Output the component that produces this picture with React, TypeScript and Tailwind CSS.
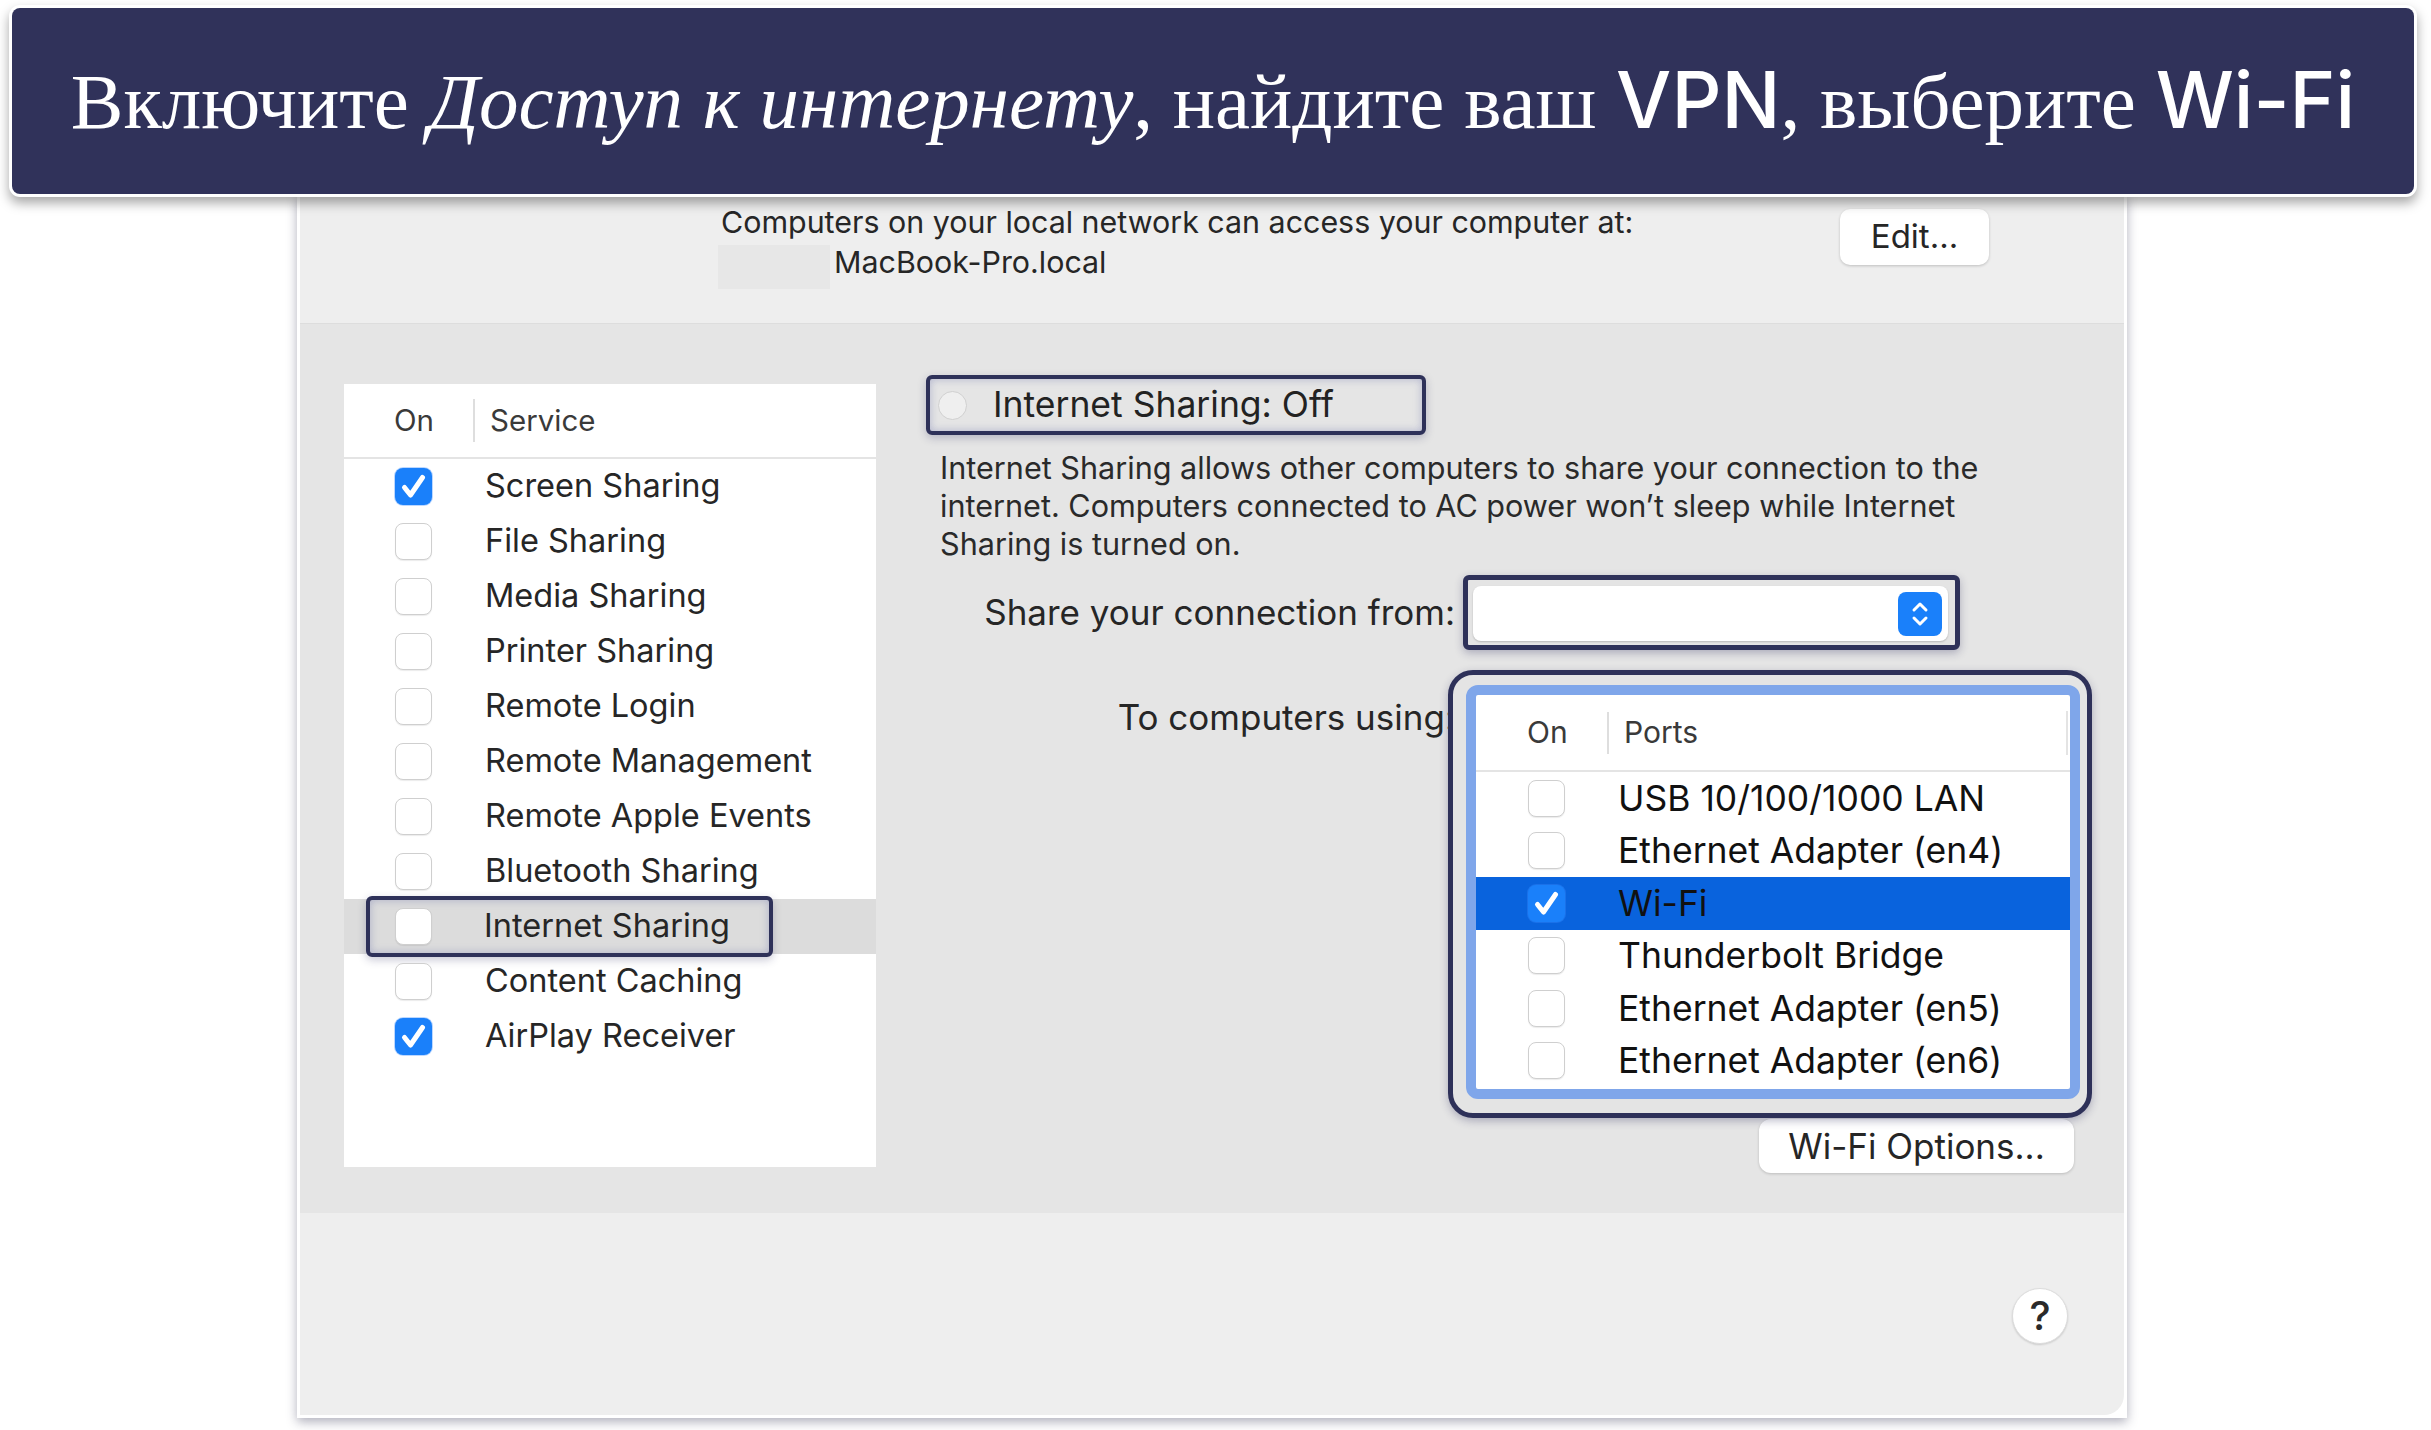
import React from "react";

const NAVY = "border-[#2e3159]";

function CheckBox({ checked = false }: { checked?: boolean }) {
  if (checked) {
    return (
      <span className="flex h-[37px] w-[37px] shrink-0 items-center justify-center rounded-[8px] bg-[#1a80fa] shadow-[0_0_0_1px_rgba(60,140,255,0.35)]">
        <svg width="37" height="37" viewBox="0 0 37 37" fill="none">
          <path d="M9.5 19.5 L15.5 27 L27.5 9.5" stroke="white" strokeWidth="5" strokeLinecap="round" strokeLinejoin="round" />
        </svg>
      </span>
    );
  }
  return (
    <span className="block h-[37px] w-[37px] shrink-0 rounded-[8px] border-[1.5px] border-[#cfcfcf] bg-white shadow-[0_1px_1px_rgba(0,0,0,0.08)]" />
  );
}

const services: { name: string; on: boolean }[] = [
  { name: "Screen Sharing", on: true },
  { name: "File Sharing", on: false },
  { name: "Media Sharing", on: false },
  { name: "Printer Sharing", on: false },
  { name: "Remote Login", on: false },
  { name: "Remote Management", on: false },
  { name: "Remote Apple Events", on: false },
  { name: "Bluetooth Sharing", on: false },
  { name: "Internet Sharing", on: false },
  { name: "Content Caching", on: false },
  { name: "AirPlay Receiver", on: true },
];

const ports: { name: string; on: boolean }[] = [
  { name: "USB 10/100/1000 LAN", on: false },
  { name: "Ethernet Adapter (en4)", on: false },
  { name: "Wi-Fi", on: true },
  { name: "Thunderbolt Bridge", on: false },
  { name: "Ethernet Adapter (en5)", on: false },
  { name: "Ethernet Adapter (en6)", on: false },
];

function Banner() {
  return (
    <div className="relative z-10 mx-[12px] mt-[8px] flex h-[186px] w-[2402px] items-center justify-center rounded-[8px] bg-[#30325a] text-white shadow-[0_0_0_3px_#ffffff,0_6px_12px_3px_rgba(0,0,0,0.35)]">
      <div className="whitespace-nowrap font-['Liberation_Serif',serif] text-[79px] leading-none">
        Включите <span className="italic">Доступ к интернету</span>, найдите ваш{" "}
        <span className="font-['Inter',sans-serif] text-[78px] font-medium">VPN</span>, выберите{" "}
        <span className="font-['Inter',sans-serif] text-[78px] font-medium">Wi-Fi</span>
      </div>
    </div>
  );
}

function ServiceList() {
  return (
    <div className="mt-[60px] h-[783px] w-[532px] bg-white">
      <div className="flex h-[75px] items-center border-b-2 border-[#e4e4e4] text-[29.5px] text-[#3a3a3a]">
        <span className="ml-[50px] w-[79px]">On</span>
        <span className="h-[43px] w-[2px] bg-[#dedede]" />
        <span className="ml-[15px]">Service</span>
      </div>
      {services.map((s) =>
        s.name === "Internet Sharing" ? (
          <div key={s.name} className="flex h-[55px] items-center bg-[#dcdcdc]">
            <div className={`ml-[22px] flex h-[61px] w-[407px] items-center rounded-[6px] border-4 ${NAVY} shadow-[inset_0_0_8px_rgba(80,90,160,0.35),0_3px_8px_rgba(40,40,90,0.25)]`}>
              <span className="ml-[25px]">
                <CheckBox />
              </span>
              <span className="ml-[52px] text-[32.5px] text-[#262626]">{s.name}</span>
            </div>
          </div>
        ) : (
          <div key={s.name} className="flex h-[55px] items-center">
            <span className="ml-[51px]">
              <CheckBox checked={s.on} />
            </span>
            <span className="ml-[53px] text-[32.5px] text-[#262626]">{s.name}</span>
          </div>
        )
      )}
    </div>
  );
}

function PortsTable() {
  return (
    <div className={`relative -ml-[15px] h-[448px] w-[644px] rounded-[25px] border-[5px] ${NAVY} bg-[#e4e4e4] pb-[14px] pl-[13px] pr-[7px] pt-[10px] shadow-[0_3px_8px_rgba(40,40,90,0.3)]`}>
      <div className="h-[414px] w-[614px] overflow-hidden rounded-[12px] border-[10px] border-[#7fa6ea] bg-white">
        <div className="flex h-[77px] items-center border-b-2 border-[#e4e4e4] text-[30px] text-[#3a3a3a]">
          <span className="ml-[51px] w-[80px]">On</span>
          <span className="h-[42px] w-[2px] bg-[#dedede]" />
          <span className="ml-[15px]">Ports</span>
          <span className="ml-auto mr-[2px] h-[44px] w-[2px] bg-[#e4e4e4]" />
        </div>
        {ports.map((p) => (
          <div key={p.name} className={`flex h-[52.5px] items-center ${p.on ? "bg-[#0963dd]" : ""}`}>
            <span className="ml-[52px]">
              <CheckBox checked={p.on} />
            </span>
            <span className="ml-[53px] text-[35.5px] text-[#111111]">{p.name}</span>
          </div>
        ))}
      </div>
    </div>
  );
}

function SharingPane() {
  return (
    <div className="ml-[50px] flex flex-col pt-[51px]">
      <div className={`flex h-[60px] w-[500px] items-center rounded-[6px] border-4 ${NAVY} pl-[8px] shadow-[inset_0_0_8px_rgba(80,90,160,0.35),0_3px_8px_rgba(40,40,90,0.25)]`}>
        <span className="h-[29px] w-[29px] rounded-full border-[1.5px] border-[#d0d0d0] bg-[#efefef]" />
        <span className="ml-[26px] text-[35.5px] text-[#222222]">Internet Sharing: Off</span>
      </div>
      <p className="ml-[14px] mt-[14px] whitespace-nowrap text-[30.6px] leading-[38px] text-[#2a2a2a]">
        Internet Sharing allows other computers to share your connection to the
        <br />
        internet. Computers connected to AC power won’t sleep while Internet
        <br />
        Sharing is turned on.
      </p>
      <div className="mt-[12px] grid grid-cols-[529px_auto] gap-x-[8px]">
        <span className="self-center text-right text-[35px] text-[#262626]">Share your connection from:</span>
        <div className={`flex h-[75px] w-[497px] items-stretch rounded-[6px] border-[5px] ${NAVY} bg-[#e4e4e4] pb-[4px] pl-[5px] pr-[7px] pt-[6px] shadow-[0_3px_8px_rgba(40,40,90,0.3)]`}>
          <div className="flex flex-1 items-center justify-end rounded-[8px] bg-white pr-[6px] shadow-[0_1px_2px_rgba(0,0,0,0.2)]">
            <span className="flex h-[44px] w-[44px] items-center justify-center rounded-[8px] bg-[#1a80fa]">
              <svg width="24" height="32" viewBox="0 0 24 32" fill="none">
                <path d="M6 12 L12 6 L18 12" stroke="white" strokeWidth="3" strokeLinecap="round" strokeLinejoin="round" />
                <path d="M6 20 L12 26 L18 20" stroke="white" strokeWidth="3" strokeLinecap="round" strokeLinejoin="round" />
              </svg>
            </span>
          </div>
        </div>
        <span className="mt-[41px] self-start text-right text-[35px] text-[#262626]">To computers using:</span>
        <div className="mt-[20px]">
          <PortsTable />
        </div>
        <span />
        <div className="flex justify-end pr-[18px]">
          <button className="mt-px h-[54px] w-[315px] rounded-[12px] bg-white text-[35px] text-[#262626] shadow-[0_1px_3px_rgba(0,0,0,0.18)]">
            Wi-Fi Options...
          </button>
        </div>
      </div>
    </div>
  );
}

function Window() {
  return (
    <div className="ml-[297px] h-[1224px] w-[1830px] border-x-[3px] border-b-[3px] border-white bg-white shadow-[0_4px_10px_rgba(60,60,90,0.4)]">
      <div className="flex h-full flex-col overflow-hidden rounded-br-[20px] font-['Inter','Noto_Sans',sans-serif]">
        {/* address header */}
        <div className="flex h-[129px] shrink-0 bg-[#eeeeee] pl-[421px]">
          <div className="w-[1119px] pt-[8px] text-[30.4px] leading-[40px] text-[#262626]">
            <div>Computers on your local network can access your computer at:</div>
            <div className="-ml-[3px] flex items-start">
              <span className="mt-[3px] h-[44px] w-[112px] bg-[#e7e7e7]" />
              <span className="ml-[4px]">MacBook-Pro.local</span>
            </div>
          </div>
          <button className="mt-[15px] h-[56px] w-[149px] rounded-[10px] bg-white text-[33px] text-[#262626] shadow-[0_1px_3px_rgba(0,0,0,0.2)]">
            Edit...
          </button>
        </div>
        {/* services and options */}
        <div className="flex h-[890px] shrink-0 border-t border-[#dddddd] bg-[#e5e5e5] pl-[44px]">
          <ServiceList />
          <SharingPane />
        </div>
        {/* footer */}
        <div className="flex flex-1 justify-end bg-[#eeeeee] pr-[56px] pt-[75px]">
          <span className="flex h-[56px] w-[56px] items-center justify-center rounded-full border border-[#dcdcdc] bg-white text-[40px] font-medium text-[#2a2a2a] shadow-[0_1px_2px_rgba(0,0,0,0.15)]">
            ?
          </span>
        </div>
      </div>
    </div>
  );
}

export default function App() {
  return (
    <div className="flex min-h-[1430px] w-[2431px] flex-col bg-white">
      <Banner />
      <Window />
    </div>
  );
}
